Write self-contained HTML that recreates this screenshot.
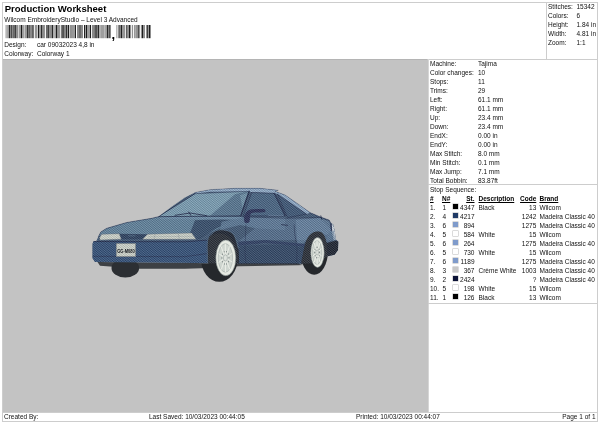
<!DOCTYPE html>
<html><head><meta charset="utf-8"><title>Production Worksheet</title>
<style>
html,body{margin:0;padding:0;background:#fff;}
body{width:600px;height:424px;position:relative;overflow:hidden;font-family:"Liberation Sans",sans-serif;color:#111;font-size:6.5px;line-height:9px;}
.a{position:absolute;white-space:nowrap;}
#frame{left:2px;top:2px;width:596px;height:420px;border:1px solid #cdcdcd;box-sizing:border-box;}
#title{left:4.7px;top:3px;font-size:9.55px;font-weight:bold;line-height:12px;color:#000;}
#gray{left:3px;top:59px;width:425.5px;height:353.5px;background:#c3c3c3;border-right:1.2px solid #d6d6d6;box-sizing:border-box;}
#tr{left:546px;top:2px;width:52px;height:57px;border-left:1px solid #cdcdcd;box-sizing:border-box;}
.hl{height:1px;background:#cdcdcd;}
.r{text-align:right;}
.hd{font-weight:bold;text-decoration:underline;color:#000;}
.sw{position:absolute;left:453px;width:5px;height:5px;box-shadow:0 0 0 0.5px #b8b8b8;}
#L{position:absolute;left:0;top:0;width:600px;height:424px;will-change:transform;}
</style></head><body><div id="L">
<div class="a" id="frame"></div>
<div class="a" id="title">Production Worksheet</div>
<div class="a" style="left:4.3px;top:14.5px">Wilcom EmbroideryStudio – Level 3 Advanced</div>
<svg class="a" style="left:5px;top:24.8px" width="150" height="18" viewBox="0 0 150 18"><g fill="#1c1c1c"><rect x="0.80" y="0" width="0.52" height="13.2"/><rect x="2.62" y="0" width="0.52" height="13.2"/><rect x="3.66" y="0" width="1.30" height="13.2"/><rect x="5.48" y="0" width="1.30" height="13.2"/><rect x="7.30" y="0" width="0.52" height="13.2"/><rect x="8.34" y="0" width="1.30" height="13.2"/><rect x="10.16" y="0" width="1.30" height="13.2"/><rect x="11.98" y="0" width="0.52" height="13.2"/><rect x="13.80" y="0" width="0.52" height="13.2"/><rect x="14.83" y="0" width="0.52" height="13.2"/><rect x="15.87" y="0" width="1.30" height="13.2"/><rect x="17.69" y="0" width="0.52" height="13.2"/><rect x="18.73" y="0" width="0.52" height="13.2"/><rect x="20.55" y="0" width="0.52" height="13.2"/><rect x="21.59" y="0" width="1.30" height="13.2"/><rect x="23.41" y="0" width="1.30" height="13.2"/><rect x="25.23" y="0" width="0.52" height="13.2"/><rect x="26.27" y="0" width="0.52" height="13.2"/><rect x="27.31" y="0" width="1.30" height="13.2"/><rect x="29.91" y="0" width="0.52" height="13.2"/><rect x="30.95" y="0" width="0.52" height="13.2"/><rect x="32.77" y="0" width="1.30" height="13.2"/><rect x="34.59" y="0" width="0.52" height="13.2"/><rect x="35.63" y="0" width="1.30" height="13.2"/><rect x="37.45" y="0" width="0.52" height="13.2"/><rect x="38.49" y="0" width="0.52" height="13.2"/><rect x="39.53" y="0" width="0.52" height="13.2"/><rect x="41.34" y="0" width="1.30" height="13.2"/><rect x="43.16" y="0" width="1.30" height="13.2"/><rect x="44.98" y="0" width="0.52" height="13.2"/><rect x="46.02" y="0" width="0.52" height="13.2"/><rect x="47.06" y="0" width="1.30" height="13.2"/><rect x="49.66" y="0" width="0.52" height="13.2"/><rect x="50.70" y="0" width="1.30" height="13.2"/><rect x="52.52" y="0" width="0.52" height="13.2"/><rect x="53.56" y="0" width="0.52" height="13.2"/><rect x="54.60" y="0" width="0.52" height="13.2"/><rect x="56.42" y="0" width="1.30" height="13.2"/><rect x="58.24" y="0" width="1.30" height="13.2"/><rect x="60.06" y="0" width="0.52" height="13.2"/><rect x="61.10" y="0" width="1.30" height="13.2"/><rect x="62.92" y="0" width="1.30" height="13.2"/><rect x="65.52" y="0" width="0.52" height="13.2"/><rect x="66.55" y="0" width="0.52" height="13.2"/><rect x="67.59" y="0" width="0.52" height="13.2"/><rect x="68.63" y="0" width="0.52" height="13.2"/><rect x="69.67" y="0" width="1.30" height="13.2"/><rect x="72.27" y="0" width="0.52" height="13.2"/><rect x="73.31" y="0" width="0.52" height="13.2"/><rect x="74.35" y="0" width="1.30" height="13.2"/><rect x="76.17" y="0" width="0.52" height="13.2"/><rect x="77.21" y="0" width="0.52" height="13.2"/><rect x="79.03" y="0" width="1.30" height="13.2"/><rect x="80.85" y="0" width="1.30" height="13.2"/><rect x="82.67" y="0" width="0.52" height="13.2"/><rect x="83.71" y="0" width="0.52" height="13.2"/><rect x="84.75" y="0" width="1.30" height="13.2"/><rect x="87.35" y="0" width="0.52" height="13.2"/><rect x="88.39" y="0" width="0.52" height="13.2"/><rect x="89.43" y="0" width="1.30" height="13.2"/><rect x="91.25" y="0" width="1.30" height="13.2"/><rect x="93.06" y="0" width="1.30" height="13.2"/><rect x="95.66" y="0" width="0.52" height="13.2"/><rect x="96.70" y="0" width="0.52" height="13.2"/><rect x="97.74" y="0" width="0.52" height="13.2"/><rect x="98.78" y="0" width="0.52" height="13.2"/><rect x="100.60" y="0" width="0.52" height="13.2"/><rect x="101.64" y="0" width="1.30" height="13.2"/><rect x="103.46" y="0" width="1.30" height="13.2"/><rect x="105.28" y="0" width="0.52" height="13.2"/><rect x="111.70" y="0" width="0.48" height="13.2"/><rect x="113.38" y="0" width="0.48" height="13.2"/><rect x="114.34" y="0" width="1.20" height="13.2"/><rect x="116.02" y="0" width="1.20" height="13.2"/><rect x="117.70" y="0" width="0.48" height="13.2"/><rect x="118.66" y="0" width="0.48" height="13.2"/><rect x="119.62" y="0" width="0.48" height="13.2"/><rect x="121.29" y="0" width="1.20" height="13.2"/><rect x="122.97" y="0" width="0.48" height="13.2"/><rect x="123.93" y="0" width="1.20" height="13.2"/><rect x="125.61" y="0" width="0.48" height="13.2"/><rect x="127.29" y="0" width="0.48" height="13.2"/><rect x="128.97" y="0" width="0.48" height="13.2"/><rect x="130.65" y="0" width="0.48" height="13.2"/><rect x="131.61" y="0" width="0.48" height="13.2"/><rect x="132.57" y="0" width="1.20" height="13.2"/><rect x="134.25" y="0" width="0.48" height="13.2"/><rect x="135.93" y="0" width="0.48" height="13.2"/><rect x="136.89" y="0" width="1.20" height="13.2"/><rect x="138.56" y="0" width="0.48" height="13.2"/><rect x="139.52" y="0" width="0.48" height="13.2"/><rect x="141.20" y="0" width="0.48" height="13.2"/><rect x="142.16" y="0" width="1.20" height="13.2"/><rect x="143.84" y="0" width="1.20" height="13.2"/><rect x="145.52" y="0" width="0.48" height="13.2"/></g><text x="106.6" y="13.6" font-size="13" font-weight="bold" font-family="Liberation Sans, sans-serif">,</text></svg>
<div class="a" style="left:4.3px;top:40.2px">Design:</div><div class="a" style="left:37px;top:40.2px">car 09032023 4,8 in</div>
<div class="a" style="left:4.3px;top:49.2px">Colorway:</div><div class="a" style="left:37px;top:49.2px">Colorway 1</div>
<div class="a hl" style="left:3px;top:58.5px;width:594px"></div>
<div class="a" id="tr"></div>
<div class="a" id="gray"></div><div class="a" style="left:3px;top:59px;width:424px;height:1px;background:#b4b4b4"></div>
<div class="a" style="left:548px;top:2.3px">Stitches:</div><div class="a" style="left:576.5px;top:2.3px">15342</div>
<div class="a" style="left:548px;top:11.2px">Colors:</div><div class="a" style="left:576.5px;top:11.2px">6</div>
<div class="a" style="left:548px;top:20.1px">Height:</div><div class="a" style="left:576.5px;top:20.1px">1.84 in</div>
<div class="a" style="left:548px;top:29.0px">Width:</div><div class="a" style="left:576.5px;top:29.0px">4.81 in</div>
<div class="a" style="left:548px;top:37.9px">Zoom:</div><div class="a" style="left:576.5px;top:37.9px">1:1</div>
<div class="a" style="left:430px;top:58.6px">Machine:</div><div class="a" style="left:478px;top:58.6px">Tajima</div>
<div class="a" style="left:430px;top:67.6px">Color changes:</div><div class="a" style="left:478px;top:67.6px">10</div>
<div class="a" style="left:430px;top:76.6px">Stops:</div><div class="a" style="left:478px;top:76.6px">11</div>
<div class="a" style="left:430px;top:85.7px">Trims:</div><div class="a" style="left:478px;top:85.7px">29</div>
<div class="a" style="left:430px;top:94.7px">Left:</div><div class="a" style="left:478px;top:94.7px">61.1 mm</div>
<div class="a" style="left:430px;top:103.7px">Right:</div><div class="a" style="left:478px;top:103.7px">61.1 mm</div>
<div class="a" style="left:430px;top:112.7px">Up:</div><div class="a" style="left:478px;top:112.7px">23.4 mm</div>
<div class="a" style="left:430px;top:121.7px">Down:</div><div class="a" style="left:478px;top:121.7px">23.4 mm</div>
<div class="a" style="left:430px;top:130.8px">EndX:</div><div class="a" style="left:478px;top:130.8px">0.00 in</div>
<div class="a" style="left:430px;top:139.8px">EndY:</div><div class="a" style="left:478px;top:139.8px">0.00 in</div>
<div class="a" style="left:430px;top:148.8px">Max Stitch:</div><div class="a" style="left:478px;top:148.8px">8.0 mm</div>
<div class="a" style="left:430px;top:157.8px">Min Stitch:</div><div class="a" style="left:478px;top:157.8px">0.1 mm</div>
<div class="a" style="left:430px;top:166.8px">Max Jump:</div><div class="a" style="left:478px;top:166.8px">7.1 mm</div>
<div class="a" style="left:430px;top:175.9px">Total Bobbin:</div><div class="a" style="left:478px;top:175.9px">83.87ft</div>
<div class="a hl" style="left:428px;top:184px;width:169px"></div>
<div class="a" style="left:430px;top:185.2px">Stop Sequence:</div>
<div class="a hd" style="left:430px;top:194.3px">#</div><div class="a hd" style="left:442px;top:194.3px">N#</div><div class="a hd r" style="left:455px;width:19.5px;top:194.3px">St.</div><div class="a hd" style="left:478.5px;top:194.3px">Description</div><div class="a hd r" style="left:516px;width:20.3px;top:194.3px">Code</div><div class="a hd" style="left:539.5px;top:194.3px">Brand</div>
<div class="a" style="left:430px;top:202.9px">1.</div><div class="a" style="left:442.6px;top:202.9px">1</div><div class="sw" style="top:204.2px;background:#000000"></div><div class="a r" style="left:455px;width:19.5px;top:202.9px">4347</div><div class="a" style="left:478.5px;top:202.9px">Black</div><div class="a r" style="left:516px;width:20.3px;top:202.9px">13</div><div class="a" style="left:539.5px;top:202.9px">Wilcom</div>
<div class="a" style="left:430px;top:211.9px">2.</div><div class="a" style="left:442.6px;top:211.9px">4</div><div class="sw" style="top:213.2px;background:#1f3a66"></div><div class="a r" style="left:455px;width:19.5px;top:211.9px">4217</div><div class="a" style="left:478.5px;top:211.9px"></div><div class="a r" style="left:516px;width:20.3px;top:211.9px">1242</div><div class="a" style="left:539.5px;top:211.9px">Madeira Classic 40</div>
<div class="a" style="left:430px;top:220.9px">3.</div><div class="a" style="left:442.6px;top:220.9px">6</div><div class="sw" style="top:222.2px;background:#7f9bcb"></div><div class="a r" style="left:455px;width:19.5px;top:220.9px">894</div><div class="a" style="left:478.5px;top:220.9px"></div><div class="a r" style="left:516px;width:20.3px;top:220.9px">1275</div><div class="a" style="left:539.5px;top:220.9px">Madeira Classic 40</div>
<div class="a" style="left:430px;top:229.8px">4.</div><div class="a" style="left:442.6px;top:229.8px">5</div><div class="sw" style="top:231.1px;background:#ffffff"></div><div class="a r" style="left:455px;width:19.5px;top:229.8px">584</div><div class="a" style="left:478.5px;top:229.8px">White</div><div class="a r" style="left:516px;width:20.3px;top:229.8px">15</div><div class="a" style="left:539.5px;top:229.8px">Wilcom</div>
<div class="a" style="left:430px;top:238.8px">5.</div><div class="a" style="left:442.6px;top:238.8px">6</div><div class="sw" style="top:240.1px;background:#7f9bcb"></div><div class="a r" style="left:455px;width:19.5px;top:238.8px">264</div><div class="a" style="left:478.5px;top:238.8px"></div><div class="a r" style="left:516px;width:20.3px;top:238.8px">1275</div><div class="a" style="left:539.5px;top:238.8px">Madeira Classic 40</div>
<div class="a" style="left:430px;top:247.8px">6.</div><div class="a" style="left:442.6px;top:247.8px">5</div><div class="sw" style="top:249.1px;background:#ffffff"></div><div class="a r" style="left:455px;width:19.5px;top:247.8px">730</div><div class="a" style="left:478.5px;top:247.8px">White</div><div class="a r" style="left:516px;width:20.3px;top:247.8px">15</div><div class="a" style="left:539.5px;top:247.8px">Wilcom</div>
<div class="a" style="left:430px;top:256.8px">7.</div><div class="a" style="left:442.6px;top:256.8px">6</div><div class="sw" style="top:258.1px;background:#7f9bcb"></div><div class="a r" style="left:455px;width:19.5px;top:256.8px">1189</div><div class="a" style="left:478.5px;top:256.8px"></div><div class="a r" style="left:516px;width:20.3px;top:256.8px">1275</div><div class="a" style="left:539.5px;top:256.8px">Madeira Classic 40</div>
<div class="a" style="left:430px;top:265.8px">8.</div><div class="a" style="left:442.6px;top:265.8px">3</div><div class="sw" style="top:267.1px;background:#c8c8c8"></div><div class="a r" style="left:455px;width:19.5px;top:265.8px">367</div><div class="a" style="left:478.5px;top:265.8px">Crème White</div><div class="a r" style="left:516px;width:20.3px;top:265.8px">1003</div><div class="a" style="left:539.5px;top:265.8px">Madeira Classic 40</div>
<div class="a" style="left:430px;top:274.7px">9.</div><div class="a" style="left:442.6px;top:274.7px">2</div><div class="sw" style="top:276.0px;background:#0b1236"></div><div class="a r" style="left:455px;width:19.5px;top:274.7px">2424</div><div class="a" style="left:478.5px;top:274.7px"></div><div class="a r" style="left:516px;width:20.3px;top:274.7px">?</div><div class="a" style="left:539.5px;top:274.7px">Madeira Classic 40</div>
<div class="a" style="left:430px;top:283.7px">10.</div><div class="a" style="left:442.6px;top:283.7px">5</div><div class="sw" style="top:285.0px;background:#ffffff"></div><div class="a r" style="left:455px;width:19.5px;top:283.7px">198</div><div class="a" style="left:478.5px;top:283.7px">White</div><div class="a r" style="left:516px;width:20.3px;top:283.7px">15</div><div class="a" style="left:539.5px;top:283.7px">Wilcom</div>
<div class="a" style="left:430px;top:292.7px">11.</div><div class="a" style="left:442.6px;top:292.7px">1</div><div class="sw" style="top:294.0px;background:#000000"></div><div class="a r" style="left:455px;width:19.5px;top:292.7px">126</div><div class="a" style="left:478.5px;top:292.7px">Black</div><div class="a r" style="left:516px;width:20.3px;top:292.7px">13</div><div class="a" style="left:539.5px;top:292.7px">Wilcom</div>
<div class="a hl" style="left:428px;top:302.5px;width:169px"></div>
<div class="a hl" style="left:3px;top:412px;width:594px"></div>
<div class="a" style="left:4px;top:412.2px">Created By:</div><div class="a" style="left:149px;top:412.2px">Last Saved: 10/03/2023 00:44:05</div><div class="a" style="left:356px;top:412.2px">Printed: 10/03/2023 00:44:07</div><div class="a r" style="left:539.5px;width:56px;top:412.2px">Page 1 of 1</div>
<svg class="a" style="left:0;top:0" width="600" height="424" viewBox="0 0 600 424">
<defs><pattern id="st" width="1.5" height="1.5" patternUnits="userSpaceOnUse" patternTransform="rotate(-35)"><rect width="1.5" height="0.6" fill="#0a1430" opacity="0.27"/><rect y="0.75" width="1.5" height="0.55" fill="#dcebf5" opacity="0.27"/></pattern>
<clipPath id="carclip"><path d="M92.50,258.33 L92.50,243.67 L93.67,241.33 L96.33,241.00 L98.33,236.67 L100.83,232.00 L106.67,228.33 L126.67,222.50 L151.67,218.33 L158.33,216.67 L171.67,206.67 L185.00,197.50 L195.00,192.50 L210.00,189.67 L235.00,188.33 L260.00,188.33 L278.33,190.33 L275.00,191.33 L285.00,195.00 L298.33,204.17 L310.00,212.50 L320.00,216.67 L329.17,220.00 L330.91,223.06 L333.24,224.54 L334.72,230.91 L335.89,239.60 L338.33,241.72 L338.01,249.99 L334.62,254.77 L327.73,256.15 L315.00,263.33 L298.33,263.67 L238.67,263.67 L206.67,263.33 L185.00,262.67 L95.00,262.00Z"/></clipPath></defs>
<polygon points="97.50,262.00 185.00,262.67 206.67,263.33 238.67,263.67 298.33,263.67 303.33,265.00 298.33,265.33 238.67,266.33 201.67,268.33 185.00,268.67 140.00,268.67 100.00,265.83" fill="#3d4044" />
<ellipse cx="125.33" cy="268.00" rx="13.80" ry="9.50" fill="#2c2f33" />
<path d="M92.50,258.33 L92.50,243.67 L93.67,241.33 L96.33,241.00 L98.33,236.67 L100.83,232.00 L106.67,228.33 L126.67,222.50 L151.67,218.33 L158.33,216.67 L171.67,206.67 L185.00,197.50 L195.00,192.50 L210.00,189.67 L235.00,188.33 L260.00,188.33 L278.33,190.33 L275.00,191.33 L285.00,195.00 L298.33,204.17 L310.00,212.50 L320.00,216.67 L329.17,220.00 L330.91,223.06 L333.24,224.54 L334.72,230.91 L335.89,239.60 L338.33,241.72 L338.01,249.99 L334.62,254.77 L327.73,256.15 L315.00,263.33 L298.33,263.67 L238.67,263.67 L206.67,263.33 L185.00,262.67 L95.00,262.00Z" fill="#3f5670" />
<g clip-path="url(#carclip)">
<polygon points="98.33,236.67 100.83,232.00 106.67,228.33 126.67,222.50 151.67,218.33 158.33,216.67 243.33,217.00 195.83,239.33 147.50,234.17 142.50,239.17 121.33,239.17 119.17,233.67 101.67,234.17" fill="#608299" />
<polygon points="195.00,220.33 221.67,219.00 236.67,219.67 216.67,228.33 200.00,238.67 195.83,239.33 190.00,233.33" fill="#283c58" opacity="0.8"/>
<polygon points="160.00,216.67 243.33,217.00 240.00,219.67 160.00,219.33" fill="#6e8fa8" opacity="0.8"/>
<polygon points="221.67,221.67 243.33,217.33 241.67,217.50 285.00,217.50 285.00,230.00 255.00,228.33 240.00,225.00 220.00,230.00" fill="#5f7c98" opacity="0.85"/>
<polygon points="241.67,217.50 320.00,218.00 331.67,230.00 331.67,240.00 265.00,240.00 238.33,241.67 255.00,228.33" fill="#5f7c98" opacity="0.6"/>
<polygon points="295.83,219.67 320.00,218.00 329.17,221.00 331.67,230.00 327.00,235.33 319.17,233.00 309.17,236.67 300.83,246.67 297.50,246.67" fill="#7593af" opacity="0.5"/>
<polygon points="238.33,245.83 265.00,244.50 308.33,244.67 300.83,265.00 238.67,263.67" fill="#283c58" opacity="0.7"/>
<polygon points="195.00,192.50 210.00,189.67 235.00,188.33 260.00,188.33 278.33,190.33 275.00,191.33 285.00,195.00 298.33,204.17 310.00,212.50 306.67,214.17 277.50,194.17 275.00,193.33 251.67,192.50 249.17,191.33 210.00,191.67 195.00,193.67" fill="#94afc9" />
<polygon points="158.33,216.67 195.00,193.67 249.17,191.33 240.83,215.83" fill="#7ca0b2" />
<polygon points="210.00,215.67 235.00,194.17 249.17,191.33 240.83,215.83" fill="#425d79" opacity="0.65"/>
<polygon points="240.00,195.33 248.00,192.67 242.50,208.33" fill="#7ca0b2" opacity="0.7"/>
<polyline points="240.83,215.83 158.33,216.67 195.00,193.67" fill="none" stroke="#1b2443" stroke-width="0.8" stroke-linecap="round" stroke-linejoin="round" />
<polyline points="195.00,193.67 249.17,191.33" fill="none" stroke="#1b2443" stroke-width="0.4" stroke-linecap="round" stroke-linejoin="round" />
<polyline points="249.17,191.33 240.83,215.83" fill="none" stroke="#1b2443" stroke-width="1.3" stroke-linecap="round" stroke-linejoin="round" />
<polyline points="175.00,215.33 190.00,213.00 206.67,215.67" fill="none" stroke="#1b2443" stroke-width="0.9" stroke-linecap="round" stroke-linejoin="round" />
<polyline points="188.67,212.00 190.83,215.33" fill="none" stroke="#1b2443" stroke-width="1.0" stroke-linecap="round" stroke-linejoin="round" />
<polygon points="251.67,192.50 275.00,193.33 285.00,214.17 285.00,216.00 243.33,215.83" fill="#46627e" />
<polygon points="277.50,194.17 306.67,214.17 287.50,217.50" fill="#3b5471" />
<polyline points="251.67,192.50 275.00,193.33 285.00,214.17 285.00,216.00 243.33,215.83 251.67,192.50" fill="none" stroke="#1b2443" stroke-width="0.6" stroke-linecap="round" stroke-linejoin="round" />
<polyline points="277.50,194.17 306.67,214.17 287.50,217.50 277.50,194.17" fill="none" stroke="#1b2443" stroke-width="0.6" stroke-linecap="round" stroke-linejoin="round" />
<polyline points="274.17,193.33 285.00,215.83" fill="none" stroke="#1b2443" stroke-width="1.0" stroke-linecap="round" stroke-linejoin="round" />
<polyline points="268.33,215.33 283.33,215.67" fill="none" stroke="#7f9bb6" stroke-width="0.5" stroke-linecap="round" stroke-linejoin="round" />
<polyline points="242.50,216.67 286.67,218.33 320.00,217.50" fill="none" stroke="#1b2443" stroke-width="0.5" stroke-linecap="round" stroke-linejoin="round" />
<polyline points="294.17,225.00 294.67,233.33 297.00,248.33 296.67,261.67" fill="none" stroke="#1b2443" stroke-width="0.5" stroke-linecap="round" stroke-linejoin="round" />
<polyline points="245.83,225.00 245.00,250.83 245.83,263.33" fill="none" stroke="#1b2443" stroke-width="0.5" stroke-linecap="round" stroke-linejoin="round" />
<polygon points="238.33,241.67 265.00,240.00 308.33,244.17 307.50,246.67 265.00,243.00 238.33,245.83" fill="#2a3a5c" />
<polyline points="238.67,263.67 298.33,263.67" fill="none" stroke="#181d26" stroke-width="0.9" stroke-linecap="round" stroke-linejoin="round" />
<path d="M244.17,217.50 C244.39,215.72 245.08,213.36 246.33,212.00 C247.58,210.64 248.83,209.83 251.67,209.33 C254.50,208.83 261.06,208.78 263.33,209.00 C265.61,209.22 265.28,210.11 265.33,210.67 C265.39,211.22 265.67,212.00 263.67,212.33 C261.67,212.67 255.56,212.22 253.33,212.67 C251.11,213.11 251.00,213.44 250.33,215.00 C249.67,216.56 250.22,220.72 249.33,222.00 C248.44,223.28 245.86,223.42 245.00,222.67 C244.14,221.92 243.94,219.28 244.17,217.50Z" fill="#252a50" />
<polyline points="281.67,224.67 287.50,225.33" fill="none" stroke="#1b2443" stroke-width="0.9" stroke-linecap="round" stroke-linejoin="round" />
<polygon points="331.33,223.91 333.24,224.76 334.72,230.91 335.89,239.60 333.66,240.45 332.60,235.15 331.76,230.91" fill="#d6dde2" />
<polygon points="330.16,223.48 331.65,223.91 332.18,230.91 330.91,230.91" fill="#1f2748" />
<polygon points="325.07,243.42 336.21,240.45 338.54,241.51 338.12,250.21 334.72,255.08 327.51,256.36" fill="#181d26" />
<polygon points="328.79,230.91 333.88,230.91 335.15,240.03 325.60,242.78" fill="#5f7c98" opacity="0.6"/>
<polyline points="310.00,212.50 320.00,217.00 329.17,220.50 331.67,223.67" fill="none" stroke="#1b2443" stroke-width="0.5" stroke-linecap="round" stroke-linejoin="round" />
<polygon points="119.17,233.67 147.50,234.17 142.50,239.50 121.33,239.50" fill="#283c58" />
<polyline points="128.67,235.83 135.00,235.83" fill="none" stroke="#6e8fa8" stroke-width="0.5" stroke-linecap="round" stroke-linejoin="round" />
<polygon points="99.67,237.50 101.67,234.17 119.17,233.67 121.33,239.17 100.00,240.00" fill="#d8dccd" stroke="#5f6b73" stroke-width="0.4"/>
<polygon points="142.50,239.33 147.50,234.17 191.67,233.00 196.00,239.17" fill="#d8dccd" stroke="#5f6b73" stroke-width="0.4"/>
<polyline points="155.00,234.33 154.17,239.17" fill="none" stroke="#8a9394" stroke-width="0.4" stroke-linecap="round" stroke-linejoin="round" />
<polyline points="178.33,234.00 179.33,239.17" fill="none" stroke="#8a9394" stroke-width="0.4" stroke-linecap="round" stroke-linejoin="round" />
<polyline points="148.33,236.67 194.17,236.33" fill="none" stroke="#a0a8a4" stroke-width="0.4" stroke-linecap="round" stroke-linejoin="round" />
<polygon points="92.50,258.33 92.50,243.67 93.67,241.33 185.00,241.67 206.67,240.00 206.67,263.33 185.00,262.67 95.00,262.00" fill="#304d73" />
<polyline points="93.33,241.50 185.00,241.83 206.67,240.17" fill="none" stroke="#1b2443" stroke-width="0.9" stroke-linecap="round" stroke-linejoin="round" />
<polyline points="92.83,256.33 185.00,256.67 206.33,253.67" fill="none" stroke="#1b2443" stroke-width="0.6" stroke-linecap="round" stroke-linejoin="round" />
<rect x="116.17" y="243.33" width="19.6" height="13.4" fill="#d8dccd" stroke="#4a5058" stroke-width="0.4"/>
<path d="M208.33,263.33 C208.33,259.44 207.36,245.28 208.33,240.00 C209.31,234.72 211.67,233.33 214.17,231.67 C216.67,230.00 220.14,229.58 223.33,230.00 C226.53,230.42 230.83,231.11 233.33,234.17 C235.83,237.22 237.39,243.42 238.33,248.33 C239.28,253.25 238.89,261.11 239.00,263.67Z" fill="#181d26" />
<path d="M300.83,265.00 C301.11,263.61 301.53,260.83 302.50,256.67 C303.47,252.50 304.86,244.03 306.67,240.00 C308.47,235.97 310.83,233.75 313.33,232.50 C315.83,231.25 319.50,230.97 321.67,232.50 C323.83,234.03 325.44,237.92 326.33,241.67 C327.22,245.42 326.89,252.78 327.00,255.00Z" fill="#181d26" />
<path d="M208.33,240.00 C209.31,238.61 211.67,233.33 214.17,231.67 C216.67,230.00 220.14,229.58 223.33,230.00 C226.53,230.42 230.83,231.11 233.33,234.17 C235.83,237.22 237.50,245.97 238.33,248.33" fill="none" stroke="#7190ab" stroke-width="0.5"/>
<path d="M306.67,240.00 C307.78,238.75 310.83,233.75 313.33,232.50 C315.83,231.25 319.50,230.97 321.67,232.50 C323.83,234.03 325.56,240.14 326.33,241.67" fill="none" stroke="#7190ab" stroke-width="0.5"/>
</g>
<clipPath id="fc"><path d="M208.33,263.67 C208.33,259.72 207.36,245.33 208.33,240.00 C209.31,234.67 211.67,233.33 214.17,231.67 C216.67,230.00 220.14,229.58 223.33,230.00 C226.53,230.42 230.83,231.11 233.33,234.17 C235.83,237.22 237.39,243.36 238.33,248.33 C239.28,253.31 238.89,261.39 239.00,264.00 L250,264 L250,290 L190,290 L190,263.6 Z"/></clipPath>
<clipPath id="rc"><path d="M300.83,265.00 C301.11,263.61 301.53,260.83 302.50,256.67 C303.47,252.50 304.86,244.03 306.67,240.00 C308.47,235.97 310.83,233.75 313.33,232.50 C315.83,231.25 319.50,230.97 321.67,232.50 C323.83,234.03 325.44,237.92 326.33,241.67 C327.22,245.42 326.89,252.78 327.00,255.00 L340,254 L340,285 L290,285 L290,265 Z"/></clipPath>
<ellipse cx="219.30" cy="257.50" rx="18.60" ry="24.30" fill="#25282c" clip-path="url(#fc)"/>
<ellipse cx="314.20" cy="250.80" rx="13.80" ry="24.00" fill="#25282c" clip-path="url(#rc)"/>
<rect x="85" y="180" width="260" height="105" fill="url(#st)" clip-path="url(#carclip)"/>
<ellipse cx="225.80" cy="257.90" rx="10.00" ry="17.90" fill="#e6eae3" stroke="#6f7a7a" stroke-width="0.5"/><ellipse cx="225.40" cy="257.90" rx="7.20" ry="14.32" fill="#cfd6d0" stroke="#9aa5a3" stroke-width="0.5"/><line x1="227.31" y1="258.96" x2="232.28" y2="262.13" stroke="#eef1ea" stroke-width="0.9"/><ellipse cx="228.34" cy="261.61" rx="0.45" ry="0.8" fill="#6d7777"/><line x1="226.60" y1="260.77" x2="229.71" y2="269.36" stroke="#eef1ea" stroke-width="0.9"/><ellipse cx="226.56" cy="264.00" rx="0.45" ry="0.8" fill="#6d7777"/><line x1="225.43" y1="261.48" x2="225.50" y2="272.22" stroke="#eef1ea" stroke-width="0.9"/><ellipse cx="224.34" cy="264.06" rx="0.45" ry="0.8" fill="#6d7777"/><line x1="224.25" y1="260.83" x2="221.25" y2="269.60" stroke="#eef1ea" stroke-width="0.9"/><ellipse cx="222.52" cy="261.76" rx="0.45" ry="0.8" fill="#6d7777"/><line x1="223.51" y1="259.05" x2="218.58" y2="262.52" stroke="#eef1ea" stroke-width="0.9"/><ellipse cx="221.80" cy="257.99" rx="0.45" ry="0.8" fill="#6d7777"/><line x1="223.49" y1="256.84" x2="218.52" y2="253.67" stroke="#eef1ea" stroke-width="0.9"/><ellipse cx="222.46" cy="254.19" rx="0.45" ry="0.8" fill="#6d7777"/><line x1="224.20" y1="255.03" x2="221.09" y2="246.44" stroke="#eef1ea" stroke-width="0.9"/><ellipse cx="224.24" cy="251.80" rx="0.45" ry="0.8" fill="#6d7777"/><line x1="225.37" y1="254.32" x2="225.30" y2="243.58" stroke="#eef1ea" stroke-width="0.9"/><ellipse cx="226.46" cy="251.74" rx="0.45" ry="0.8" fill="#6d7777"/><line x1="226.55" y1="254.97" x2="229.55" y2="246.20" stroke="#eef1ea" stroke-width="0.9"/><ellipse cx="228.28" cy="254.04" rx="0.45" ry="0.8" fill="#6d7777"/><line x1="227.29" y1="256.75" x2="232.22" y2="253.28" stroke="#eef1ea" stroke-width="0.9"/><ellipse cx="229.00" cy="257.81" rx="0.45" ry="0.8" fill="#6d7777"/><ellipse cx="225.40" cy="257.90" rx="2.00" ry="3.04" fill="#dfe4de" stroke="#7d8888" stroke-width="0.4"/>
<ellipse cx="317.50" cy="252.50" rx="6.70" ry="15.00" fill="#e6eae3" stroke="#6f7a7a" stroke-width="0.5"/><ellipse cx="317.10" cy="252.50" rx="4.82" ry="12.00" fill="#cfd6d0" stroke="#9aa5a3" stroke-width="0.5"/><line x1="318.38" y1="253.39" x2="321.71" y2="256.05" stroke="#eef1ea" stroke-width="0.9"/><ellipse cx="319.07" cy="255.61" rx="0.45" ry="0.8" fill="#6d7777"/><line x1="317.90" y1="254.90" x2="319.99" y2="262.11" stroke="#eef1ea" stroke-width="0.9"/><ellipse cx="317.88" cy="257.61" rx="0.45" ry="0.8" fill="#6d7777"/><line x1="317.12" y1="255.50" x2="317.17" y2="264.50" stroke="#eef1ea" stroke-width="0.9"/><ellipse cx="316.39" cy="257.66" rx="0.45" ry="0.8" fill="#6d7777"/><line x1="316.33" y1="254.95" x2="314.32" y2="262.31" stroke="#eef1ea" stroke-width="0.9"/><ellipse cx="315.17" cy="255.74" rx="0.45" ry="0.8" fill="#6d7777"/><line x1="315.83" y1="253.47" x2="312.53" y2="256.37" stroke="#eef1ea" stroke-width="0.9"/><ellipse cx="314.69" cy="252.58" rx="0.45" ry="0.8" fill="#6d7777"/><line x1="315.82" y1="251.61" x2="312.49" y2="248.95" stroke="#eef1ea" stroke-width="0.9"/><ellipse cx="315.13" cy="249.39" rx="0.45" ry="0.8" fill="#6d7777"/><line x1="316.30" y1="250.10" x2="314.21" y2="242.89" stroke="#eef1ea" stroke-width="0.9"/><ellipse cx="316.32" cy="247.39" rx="0.45" ry="0.8" fill="#6d7777"/><line x1="317.08" y1="249.50" x2="317.03" y2="240.50" stroke="#eef1ea" stroke-width="0.9"/><ellipse cx="317.81" cy="247.34" rx="0.45" ry="0.8" fill="#6d7777"/><line x1="317.87" y1="250.05" x2="319.88" y2="242.69" stroke="#eef1ea" stroke-width="0.9"/><ellipse cx="319.03" cy="249.26" rx="0.45" ry="0.8" fill="#6d7777"/><line x1="318.37" y1="251.53" x2="321.67" y2="248.63" stroke="#eef1ea" stroke-width="0.9"/><ellipse cx="319.51" cy="252.42" rx="0.45" ry="0.8" fill="#6d7777"/><ellipse cx="317.10" cy="252.50" rx="1.34" ry="2.55" fill="#dfe4de" stroke="#7d8888" stroke-width="0.4"/>
<text x="117.17" y="253.33" font-family="Liberation Sans, sans-serif" font-size="4.8" font-weight="bold" fill="#15181f" textLength="17.6" lengthAdjust="spacingAndGlyphs">GG·M080</text>
<polyline points="98.33,236.67 100.83,232.00 106.67,228.33 126.67,222.50 151.67,218.33 158.33,216.67" fill="none" stroke="#1b2443" stroke-width="0.5" stroke-linecap="round" stroke-linejoin="round" opacity="0.8"/>
<polyline points="195.00,192.50 210.00,189.67 235.00,188.33 260.00,188.33 278.33,190.33 275.00,191.33 285.00,195.00 298.33,204.17 310.00,212.50 320.00,216.67 329.17,220.00 330.91,223.06" fill="none" stroke="#1b2443" stroke-width="0.4" stroke-linecap="round" stroke-linejoin="round" opacity="0.6"/>
<polyline points="320.83,215.85 321.68,219.24" fill="none" stroke="#1b2443" stroke-width="0.8" stroke-linecap="round" stroke-linejoin="round" />
</svg></div></body></html>
